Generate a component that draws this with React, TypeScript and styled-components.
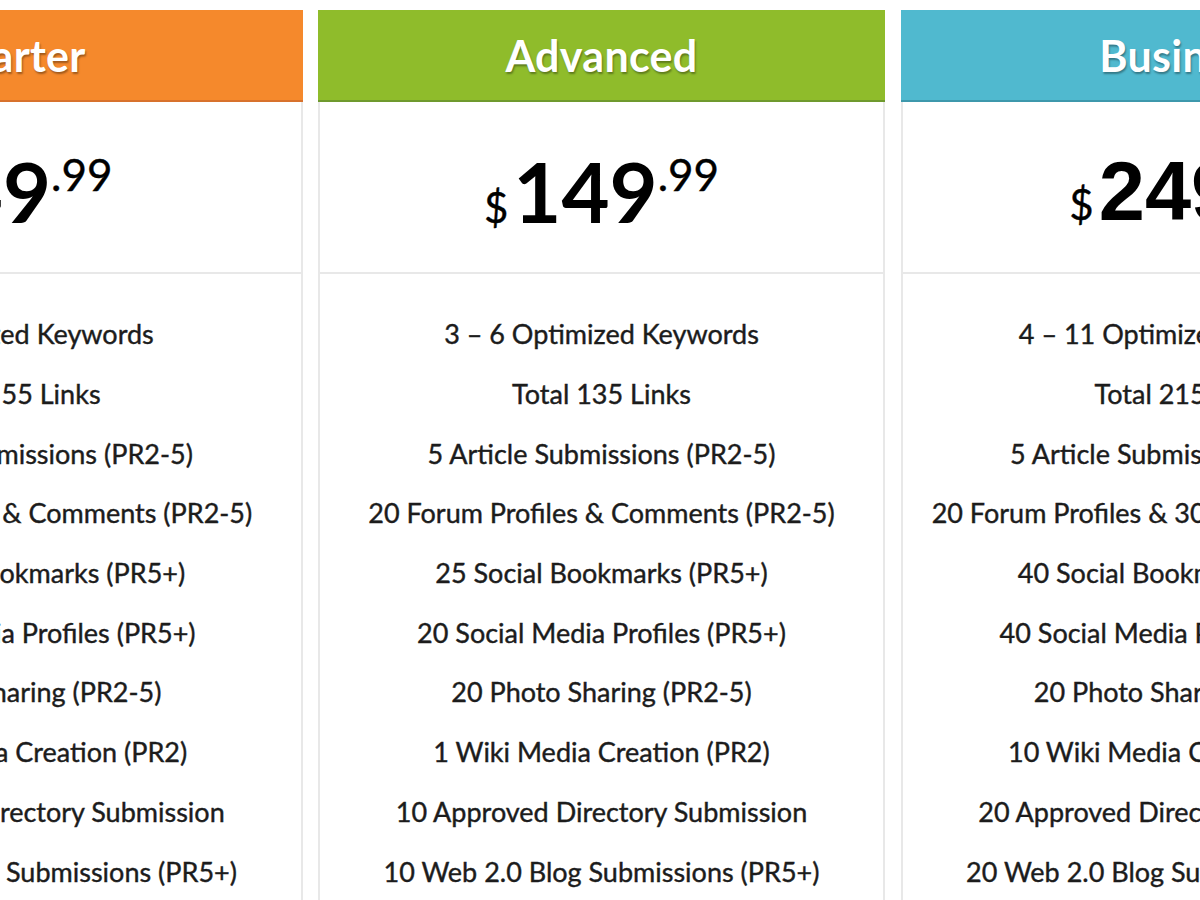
import React from 'react'
import styled, { createGlobalStyle } from 'styled-components'

const Global = createGlobalStyle`
    html, body {
        margin: 0;
        padding: 0;
        background: #fff;
        overflow: hidden;
    }
    body {
        font-family: Lato, "Open Sans", sans-serif;
    }
`

const Table = styled.div`
    display: flex;
    justify-content: center;
    gap: 15.5px;
    width: 1200px;
    padding: 10px 0 0 3px;
    box-sizing: border-box;
`

const Column = styled.div`
    flex: 0 0 567px;
    width: 567px;
`

const Header = styled.div<{ bg: string, edge: string }>`
    height: 90px;
    background: ${(p) => p.bg};
    border-bottom: 2px solid ${(p) => p.edge};
    display: flex;
    align-items: center;
    justify-content: center;
`

const Title = styled.h2`
    margin: 0;
    color: #fff;
    font-family: Lato, sans-serif;
    font-weight: 700;
    font-size: 43px;
    letter-spacing: 0.3px;
    text-shadow: 1px 2px 2px rgba(0, 0, 0, 0.35);
`

const Body = styled.div`
    border-left: 2px solid #e8e8e8;
    border-right: 2px solid #e8e8e8;
`

const PriceBox = styled.div`
    height: 172px;
    border-bottom: 2px solid #e8e8e8;
    display: flex;
    align-items: center;
    justify-content: center;
    padding-top: 8px;
    box-sizing: border-box;
`

const Price = styled.div`
    color: #000;
    white-space: nowrap;
    line-height: 1;
`

const Currency = styled.span`
    font-size: 42px;
    font-weight: 400;
    margin-right: 5px;
    -webkit-text-stroke: 0.4px #000;
`

const Amount = styled.span<{ alt?: boolean }>`
    font-family: ${(p) => (p.alt ? '"Liberation Sans", Arial' : 'Lato')}, sans-serif;
    font-size: 83px;
    font-weight: 700;
`

const Cents = styled.span`
    font-size: 44px;
    font-weight: 400;
    vertical-align: 32px;
    -webkit-text-stroke: 0.4px #000;
`

const Features = styled.ul`
    list-style: none;
    margin: 0;
    padding: 30px 0 0;
`

const Feature = styled.li`
    height: 59.7px;
    display: flex;
    align-items: center;
    justify-content: center;
    font-size: 27px;
    color: #1c1c1c;
    -webkit-text-stroke: 0.4px #1c1c1c;
    white-space: nowrap;
`

type Plan = {
    name: string
    bg: string
    edge: string
    amount: string
    altFont?: boolean
    items: string[]
}

const plans: Plan[] = [
    {
        name: 'Starter',
        bg: '#f5892c',
        edge: '#d8722d',
        amount: '49',
        items: [
            '3 Optimized Keywords',
            'Total 55 Links',
            '3 Article Submissions (PR2-5)',
            '10 Forum Profiles & Comments (PR2-5)',
            '10 Social Bookmarks (PR5+)',
            '5 Social Media Profiles (PR5+)',
            '5 Photo Sharing (PR2-5)',
            '1 Wiki Media Creation (PR2)',
            '10 Approved Directory Submission',
            '10 Web 2.0 Blog Submissions (PR5+)',
        ],
    },
    {
        name: 'Advanced',
        bg: '#8fbc2b',
        edge: '#6f9a2e',
        amount: '149',
        items: [
            '3 – 6 Optimized Keywords',
            'Total 135 Links',
            '5 Article Submissions (PR2-5)',
            '20 Forum Profiles & Comments (PR2-5)',
            '25 Social Bookmarks (PR5+)',
            '20 Social Media Profiles (PR5+)',
            '20 Photo Sharing (PR2-5)',
            '1 Wiki Media Creation (PR2)',
            '10 Approved Directory Submission',
            '10 Web 2.0 Blog Submissions (PR5+)',
        ],
    },
    {
        name: 'Business',
        bg: '#50b9cf',
        edge: '#3e98ac',
        amount: '249',
        altFont: true,
        items: [
            '4 – 11 Optimized Keywords',
            'Total 215 Links',
            '5 Article Submissions (PR2-5)',
            '20 Forum Profiles & 30 Comments (PR2-5)',
            '40 Social Bookmarks (PR5+)',
            '40 Social Media Profiles (PR5+)',
            '20 Photo Sharing (PR2-5)',
            '10 Wiki Media Creation (PR2)',
            '20 Approved Directory Submission',
            '20 Web 2.0 Blog Submissions (PR5+)',
        ],
    },
]

const App = () => {
    return (
        <>
            <Global />
            <Table>
                {plans.map((plan) => (
                    <Column key={plan.name}>
                        <Header bg={plan.bg} edge={plan.edge}>
                            <Title>{plan.name}</Title>
                        </Header>
                        <Body>
                            <PriceBox>
                                <Price>
                                    <Currency>$</Currency>
                                    <Amount alt={plan.altFont}>{plan.amount}</Amount>
                                    <Cents>.99</Cents>
                                </Price>
                            </PriceBox>
                            <Features>
                                {plan.items.map((item, i) => (
                                    <Feature key={i}>{item}</Feature>
                                ))}
                            </Features>
                        </Body>
                    </Column>
                ))}
            </Table>
        </>
    )
}

export default App
